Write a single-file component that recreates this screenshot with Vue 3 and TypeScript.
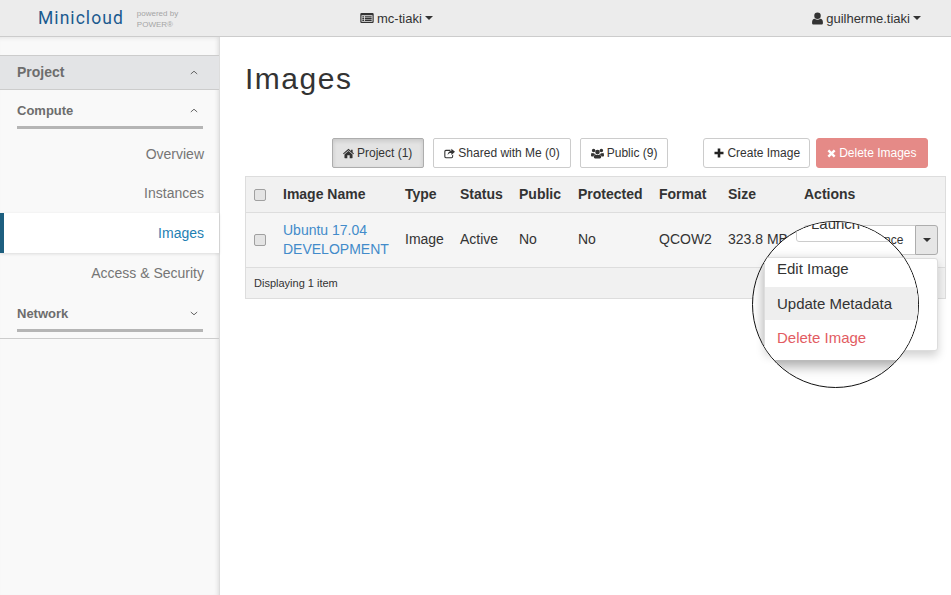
<template>
  <div class="page">
    <header class="topbar">
      <div class="brand">
        <span class="logo">Minicloud</span>
        <span class="powered">powered by<br />POWER®</span>
      </div>
      <div class="project-pick">
        <svg class="ico" width="14" height="12" viewBox="0 0 14 12"><path fill="#333" fill-rule="evenodd" d="M1.500 1h11A1.200 1.200 0 0 1 13.700 2.200v7.600A1.200 1.200 0 0 1 12.500 11h-11A1.200 1.200 0 0 1 .3 9.800V2.200A1.200 1.200 0 0 1 1.500 1zM1.500 3.200v6.600h11V3.200zM2.300 4.200h1.700v1.200H2.300zM4.800 4.200h6.900v1.200H4.800zM2.300 6h1.700v1.200H2.300zM4.800 6h6.900v1.200H4.800zM2.300 7.800h1.700V9H2.300zM4.800 7.800h6.900V9H4.800z" /></svg>
        <span>mc-tiaki</span>
        <i class="caret"></i>
      </div>
      <div class="user-pick">
        <svg class="ico" width="11" height="13" viewBox="0 0 10 12"><path fill="#333" d="M5 .5a3 3 0 0 1 3 3 3 3 0 0 1-6 0 3 3 0 0 1 3-3zM2.400 6.200C3.100 6.900 4 7.200 5 7.200s1.900-.3 2.600-1c1.500.1 2.400 1.300 2.400 3.200v.9c0 .8-.6 1.200-1.300 1.200H1.300C.6 11.500 0 11.100 0 10.300v-.9c0-1.900.9-3.100 2.400-3.200z" /></svg>
        <span>guilherme.tiaki</span>
        <i class="caret"></i>
      </div>
    </header>

    <div class="body">
      <aside class="sidebar">
        <div class="section-head">
          <span>Project</span>
          <svg width="8" height="5" viewBox="0 0 8 5"><path d="M.8 4 4 1.200 7.200 4" fill="none" stroke="#666" stroke-width="1" /></svg>
        </div>
        <div class="group-head">
          <span>Compute</span>
          <svg width="8" height="5" viewBox="0 0 8 5"><path d="M.8 4 4 1.200 7.200 4" fill="none" stroke="#666" stroke-width="1" /></svg>
        </div>
        <nav class="nav">
          <a v-for="item in navItems" :key="item" class="nav-item" :class="{ active: item === 'Images' }">{{ item }}</a>
        </nav>
        <div class="group-head network">
          <span>Network</span>
          <svg width="8" height="5" viewBox="0 0 8 5"><path d="M.8 1 4 3.800 7.200 1" fill="none" stroke="#666" stroke-width="1" /></svg>
        </div>
        <div class="side-rule"></div>
      </aside>

      <main class="content">
        <h1>Images</h1>
        <div class="toolbar">
          <button class="btn pressed">
            <svg class="ico" width="11" height="11" viewBox="0 0 12 11"><path fill="#333" d="M6 .3 8.800 2.700V1.300h1.700v2.900L12 5.500l-.8.900L6 2 .8 6.400 0 5.500zM6 2.900l4.400 3.700v3.600c0 .3-.2.500-.5.500H7.300V7.500H4.700v3.200H2.100c-.3 0-.5-.2-.5-.5V6.600z" /></svg>
            Project (1)
          </button>
          <button class="btn">
            <svg class="ico" width="11" height="11" viewBox="0 0 12 11"><path fill="#333" d="M2 1.500h5v1.200H2.200a.7.700 0 0 0-.7.700v5.400c0 .4.300.7.700.7h6c.4 0 .7-.3.700-.7V7.500L10 6.500v2.300A1.800 1.800 0 0 1 8.200 10.600H2A1.800 1.800 0 0 1 .3 8.800V3.300A1.800 1.800 0 0 1 2 1.500zM8 .4 12 3.700 8 7V5C5.800 5 4.600 5.600 4 7.500 4 4.700 5.500 2.700 8 2.500z" /></svg>
            Shared with Me (0)
          </button>
          <button class="btn">
            <svg class="ico" width="13" height="11" viewBox="0 0 14 11"><path fill="#333" d="M7 1.500a2.500 2.500 0 1 1 0 5 2.500 2.500 0 0 1 0-5zM2.800.4a1.900 1.900 0 1 1 0 3.800 1.900 1.900 0 0 1 0-3.800zM11.200.4a1.900 1.900 0 1 1 0 3.800 1.900 1.900 0 0 1 0-3.800zM.9 4.600c.5.400 1.100.6 1.900.6h.7C3.700 6 4 6.400 4.600 6.800 3.300 7 2.900 7.700 2.800 8.700H1C.3 8.700 0 8.300 0 7.700 0 6.300.2 5.100.9 4.600zM13.100 4.600c.7.500.9 1.700.9 3.100 0 .6-.3 1-1 1h-1.800c-.1-1-.5-1.700-1.800-1.900.6-.4.900-.8 1.100-1.600h.7c.8 0 1.400-.2 1.900-.6zM5 6.500c.5.300 1.200.6 2 .6s1.500-.3 2-.6c1.400.2 1.900 1.400 1.900 2.900 0 .9-.5 1.400-1.300 1.400H4.400c-.8 0-1.300-.5-1.300-1.400 0-1.500.5-2.700 1.900-2.900z" /></svg>
            Public (9)
          </button>
          <button class="btn create">
            <svg class="ico" width="10" height="10" viewBox="0 0 10 10"><path fill="#222" d="M3.700.5h2.600v3.200h3.200v2.600H6.300v3.200H3.700V6.300H.5V3.700h3.200z" /></svg>
            Create Image
          </button>
          <button class="btn danger">
            <svg class="ico" width="9" height="9" viewBox="0 0 9 9"><path fill="#fff" d="M2.200.5 4.500 2.800 6.800.5l1.700 1.700L6.200 4.500l2.300 2.300-1.700 1.700L4.500 6.200 2.200 8.500.5 6.800l2.300-2.300L.5 2.200z" /></svg>
            Delete Images
          </button>
        </div>

        <table class="images">
          <colgroup>
            <col v-for="w in colWidths" :key="w.id" :style="{ width: w.px + 'px' }" />
          </colgroup>
          <thead>
            <tr>
              <th><span class="check"></span></th>
              <th v-for="col in columns" :key="col">{{ col }}</th>
            </tr>
          </thead>
          <tbody>
            <tr>
              <td><span class="check"></span></td>
              <td><a class="link">Ubuntu 17.04 DEVELOPMENT</a></td>
              <td class="single">Image</td>
              <td class="single">Active</td>
              <td class="single">No</td>
              <td class="single">No</td>
              <td class="single">QCOW2</td>
              <td class="single nowrap">323.8 MB</td>
              <td class="actions">
                <div class="split">
                  <span class="launch">Launch Instance</span>
                  <span class="split-caret"><i class="caret"></i></span>
                </div>
              </td>
            </tr>
          </tbody>
          <tfoot>
            <tr>
              <td colspan="9">Displaying 1 item</td>
            </tr>
          </tfoot>
        </table>
      </main>
    </div>

    <!-- normal size menu, only its right edge shows past the lens -->
    <div class="menu-flat"></div>

    <div class="lens">
      <div class="lens-launch">Launch</div>
      <ul class="lens-menu">
        <li>Edit Image</li>
        <li class="hover">Update Metadata</li>
        <li class="del">Delete Image</li>
      </ul>
    </div>
  </div>
</template>

<script setup lang="ts">
const navItems: string[] = ['Overview', 'Instances', 'Images', 'Access & Security']
const columns: string[] = ['Image Name', 'Type', 'Status', 'Public', 'Protected', 'Format', 'Size', 'Actions']

const colWidths = [29.5, 122, 55, 59, 59, 81, 69, 76, 149.5].map((px, id) => ({ id, px }))
</script>

<style>
html,
body {
  margin: 0;
  background: #fff;
}
</style>

<style scoped>
.page {
  position: relative;
  display: flex;
  flex-direction: column;
  width: 951px;
  height: 595px;
  overflow: hidden;
  font-family: 'Liberation Sans', Arial, sans-serif;
  font-size: 14px;
  color: #333;
}

.topbar {
  display: grid;
  grid-template-columns: 360px 1fr auto;
  align-items: center;
  height: 36px;
  flex: none;
  padding-right: 30px;
  background: #ececec;
  border-bottom: 1px solid #ccc;
  font-size: 13px;
}

.brand {
  display: flex;
  align-items: center;
  padding-left: 38px;
  gap: 13px;
}

.logo {
  font-family: Roboto, sans-serif;
  font-size: 17.500px;
  letter-spacing: 1.050px;
  color: #1b5a8f;
}

.powered {
  padding-top: 1px;
  font-size: 8px;
  line-height: 11px;
  color: #a5a5a5;
}

.project-pick,
.user-pick {
  display: flex;
  align-items: center;
  gap: 3px;
}

.caret {
  display: inline-block;
  width: 0;
  height: 0;
  border-top: 4px solid #333;
  border-left: 4px solid transparent;
  border-right: 4px solid transparent;
}

.body {
  flex: 1;
  display: flex;
  min-height: 0;
}

.sidebar {
  width: 220px;
  flex: none;
  padding-top: 18px;
  box-sizing: border-box;
  background: #f9f9f9;
  border-right: 1px solid #ddd;
  box-shadow: inset -4px 0 4px -3px #ddd, inset 0 4px 4px -3px #e5e5e5;
}

.section-head {
  display: flex;
  justify-content: space-between;
  align-items: center;
  height: 32px;
  padding: 0 21px 1px 17px;
  background: #e3e4e6;
  border-top: 1px solid #ccc;
  border-bottom: 1px solid #ccc;
  font-size: 14px;
  font-weight: 700;
  color: #6d6d6d;
}

.group-head {
  display: flex;
  justify-content: space-between;
  align-items: center;
  height: 32px;
  margin: 4px 16px 0 17px;
  padding-right: 5px;
  border-bottom: 3px solid #b5b5b5;
  font-size: 13px;
  font-weight: 700;
  color: #6d6d6d;
}

.group-head.network {
  margin-top: 4px;
}

.nav {
  display: flex;
  flex-direction: column;
}

.nav-item {
  height: 40px;
  line-height: 40px;
  padding-right: 15px;
  text-align: right;
  color: #757575;
}

.nav-item:first-child {
  height: 39px;
  margin-top: 5px;
}

.nav-item.active {
  padding-right: 15px;
  background: #fff;
  color: #1f7fb3;
  border-left: 4px solid #1d5f7f;
  box-shadow: 0 1px 3px rgba(0, 0, 0, 0.12);
}

.side-rule {
  margin-top: 6px;
  border-top: 1px solid #ccc;
}

.content {
  flex: 1;
  min-width: 0;
  padding: 0 5px 0 25px;
}

h1 {
  margin: 24px 0 0;
  font-size: 30px;
  line-height: 36px;
  font-weight: 400;
  letter-spacing: 1.500px;
  color: #333;
}

.toolbar {
  display: flex;
  gap: 9px;
  margin-top: 41px;
  padding-left: 87px;
}

.btn {
  display: inline-flex;
  align-items: center;
  gap: 3px;
  height: 30px;
  padding: 0 10px;
  box-sizing: border-box;
  border: 1px solid #ccc;
  border-radius: 2px;
  background: #fff;
  font-family: inherit;
  font-size: 12px;
  color: #333;
}

.btn.pressed {
  padding-right: 11px;
  background: #e3e3e3;
  border-color: #adadad;
  box-shadow: inset 0 2px 4px rgba(0, 0, 0, 0.125);
}

.btn.create {
  margin-left: 26px;
  padding-right: 9px;
  border-radius: 3px;
}

.btn.danger {
  margin-left: -3px;
  border-color: #e58a87;
  border-radius: 3px;
  background: #e58a87;
  color: #fff;
}

.images {
  width: 701px;
  margin-top: 8px;
  border-collapse: collapse;
  table-layout: fixed;
  background: #f5f5f5;
  border: 1px solid #ddd;
}

.images th,
.images td {
  padding: 8px;
  text-align: left;
  vertical-align: middle;
  line-height: 19px;
}

.images th {
  height: 19px;
  background: #f1f1f1;
  border-bottom: 1px solid #ddd;
}

.images td.single {
  padding-bottom: 10px;
}

.images td.actions {
  padding-right: 7px;
}

.images tfoot td {
  background: #f1f1f1;
  border-top: 1px solid #ddd;
  font-size: 11px;
  line-height: 14px;
}

.check {
  display: block;
  width: 10px;
  height: 10px;
  border: 1px solid #a0a0a0;
  border-radius: 2px;
  background: #e4e4e4;
}

.link {
  color: #428bca;
}

.nowrap {
  white-space: nowrap;
}

.split {
  display: flex;
  justify-content: flex-end;
  height: 30px;
  font-size: 12px;
}

.launch {
  display: block;
  width: 118px;
  height: 30px;
  line-height: 28px;
  padding-right: 12px;
  box-sizing: border-box;
  text-align: right;
  border: 1px solid #ccc;
  border-right: 0;
  border-radius: 3px 0 0 3px;
  background: #fff;
}

.split-caret {
  display: flex;
  align-items: center;
  justify-content: center;
  width: 24px;
  height: 30px;
  box-sizing: border-box;
  border: 1px solid #adadad;
  border-radius: 0 3px 3px 0;
  background: #e6e6e6;
}

.menu-flat {
  position: absolute;
  left: 765px;
  top: 258px;
  width: 173px;
  height: 93px;
  background: #fff;
  border: 1px solid #ddd;
  border-radius: 3px;
  box-sizing: border-box;
  box-shadow: 0 5px 10px rgba(0, 0, 0, 0.18);
}

.lens {
  position: absolute;
  left: 752px;
  top: 221px;
  width: 167px;
  height: 167px;
  box-sizing: border-box;
  border: 1px solid #111;
  border-radius: 50%;
  overflow: hidden;
  background: #fff;
}

.lens-launch {
  position: absolute;
  left: 43px;
  top: -12px;
  width: 130px;
  height: 32px;
  box-sizing: border-box;
  padding-left: 14px;
  border: 1px solid #ccc;
  border-radius: 3px;
  font-size: 15px;
  line-height: 26px;
  background: #fff;
}

.lens-menu {
  position: absolute;
  left: 11px;
  top: 35px;
  width: 190px;
  height: 104px;
  margin: 0;
  padding: 0;
  box-sizing: border-box;
  list-style: none;
  background: #fff;
  border: 1px solid #ddd;
  border-bottom-color: #bbb;
  box-shadow: 0 5px 12px rgba(0, 0, 0, 0.35);
  font-size: 15px;
}

.lens-menu li {
  height: 33px;
  line-height: 33px;
  padding-left: 12px;
  color: #333;
}

.lens-menu li:first-child {
  height: 29px;
  line-height: 22px;
}

.lens-menu .hover {
  background: #eee;
}

.lens-menu .del {
  line-height: 35px;
  color: #e25c62;
}
</style>
